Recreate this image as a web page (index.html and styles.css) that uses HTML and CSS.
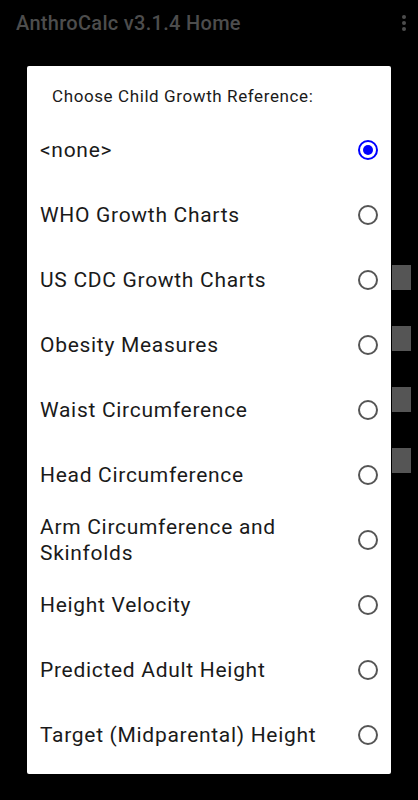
FILE: index.html
```html
<!DOCTYPE html>
<html lang="en">
<head>
    <meta charset="UTF-8">
    <meta name="viewport" content="width=device-width, initial-scale=1.0">
    <title>AnthroCalc v3.1.4 Home</title>
    <link rel="stylesheet" href="styles.css">
</head>
<body>
    <header class="appbar">
        <span class="appbar-title">AnthroCalc v3.1.4 Home</span>
        <span class="overflow">
            <i></i><i></i><i></i>
        </span>
    </header>

    <div class="backdrop">
        <div class="bg-tiles">
            <span></span><span></span><span></span><span></span>
        </div>

        <div class="dialog">
            <h2 class="dialog-title">Choose Child Growth Reference:</h2>
            <ul class="choices">
                <li class="choice"><span>&lt;none&gt;</span><span class="radio checked"></span></li>
                <li class="choice"><span>WHO Growth Charts</span><span class="radio"></span></li>
                <li class="choice"><span>US CDC Growth Charts</span><span class="radio"></span></li>
                <li class="choice"><span>Obesity Measures</span><span class="radio"></span></li>
                <li class="choice"><span>Waist Circumference</span><span class="radio"></span></li>
                <li class="choice"><span>Head Circumference</span><span class="radio"></span></li>
                <li class="choice"><span>Arm Circumference and Skinfolds</span><span class="radio"></span></li>
                <li class="choice"><span>Height Velocity</span><span class="radio"></span></li>
                <li class="choice"><span>Predicted Adult Height</span><span class="radio"></span></li>
                <li class="choice"><span>Target (Midparental) Height</span><span class="radio"></span></li>
            </ul>
        </div>
    </div>
</body>
</html>
```

FILE: styles.css
```css
body {
    margin: 0;
    padding: 0;
    background: #000;
    font-family: Roboto, "Liberation Sans", sans-serif;
    width: 418px;
    height: 800px;
    overflow: hidden;
}

.appbar {
    height: 46px;
    display: flex;
    align-items: center;
    justify-content: space-between;
    padding: 0 16px;
}
.appbar-title {
    color: #4d4d4d;
    font-size: 20px;
    font-weight: 500;
    letter-spacing: 0.3px;
}
.overflow {
    display: flex;
    flex-direction: column;
    gap: 2px;
    margin-right: -4px;
}
.overflow i {
    width: 4px;
    height: 4px;
    border-radius: 50%;
    background: #4d4d4d;
}

.backdrop {
    position: relative;
    padding: 20px 0 0 27px;
}
/* bits of the home screen peeking out behind the dialog */
.bg-tiles {
    position: absolute;
    left: 392px;
    top: 219px;
    display: flex;
    flex-direction: column;
    gap: 36px;
}
.bg-tiles span {
    width: 19px;
    height: 25px;
    background: #555;
}

.dialog {
    position: relative;
    width: 364px;
    height: 708px;
    background: #fff;
    border-radius: 2px;
    box-sizing: border-box;
}
.dialog-title {
    margin: 0;
    padding: 20px 0 0 25px;
    height: 51px;
    box-sizing: border-box;
    font-size: 17px;
    font-weight: 400;
    letter-spacing: 0.6px;
    color: #1a1a1a;
}
.choices {
    list-style: none;
    margin: 0;
    padding: 0;
}
.choice {
    height: 65px;
    display: flex;
    align-items: center;
    justify-content: space-between;
    padding: 0 13px 0 13px;
    font-size: 21px;
    line-height: 26px;
    letter-spacing: 0.7px;
    color: #1a1a1a;
}
.choice span:first-child {
    max-width: 290px;
}
.radio {
    width: 16px;
    height: 16px;
    border: 2px solid #555;
    border-radius: 50%;
    position: relative;
    flex: none;
}
.radio.checked {
    border-color: #0000ff;
}
.radio.checked::after {
    content: "";
    position: absolute;
    left: 3px;
    top: 3px;
    width: 10px;
    height: 10px;
    border-radius: 50%;
    background: #0000ff;
}
```
